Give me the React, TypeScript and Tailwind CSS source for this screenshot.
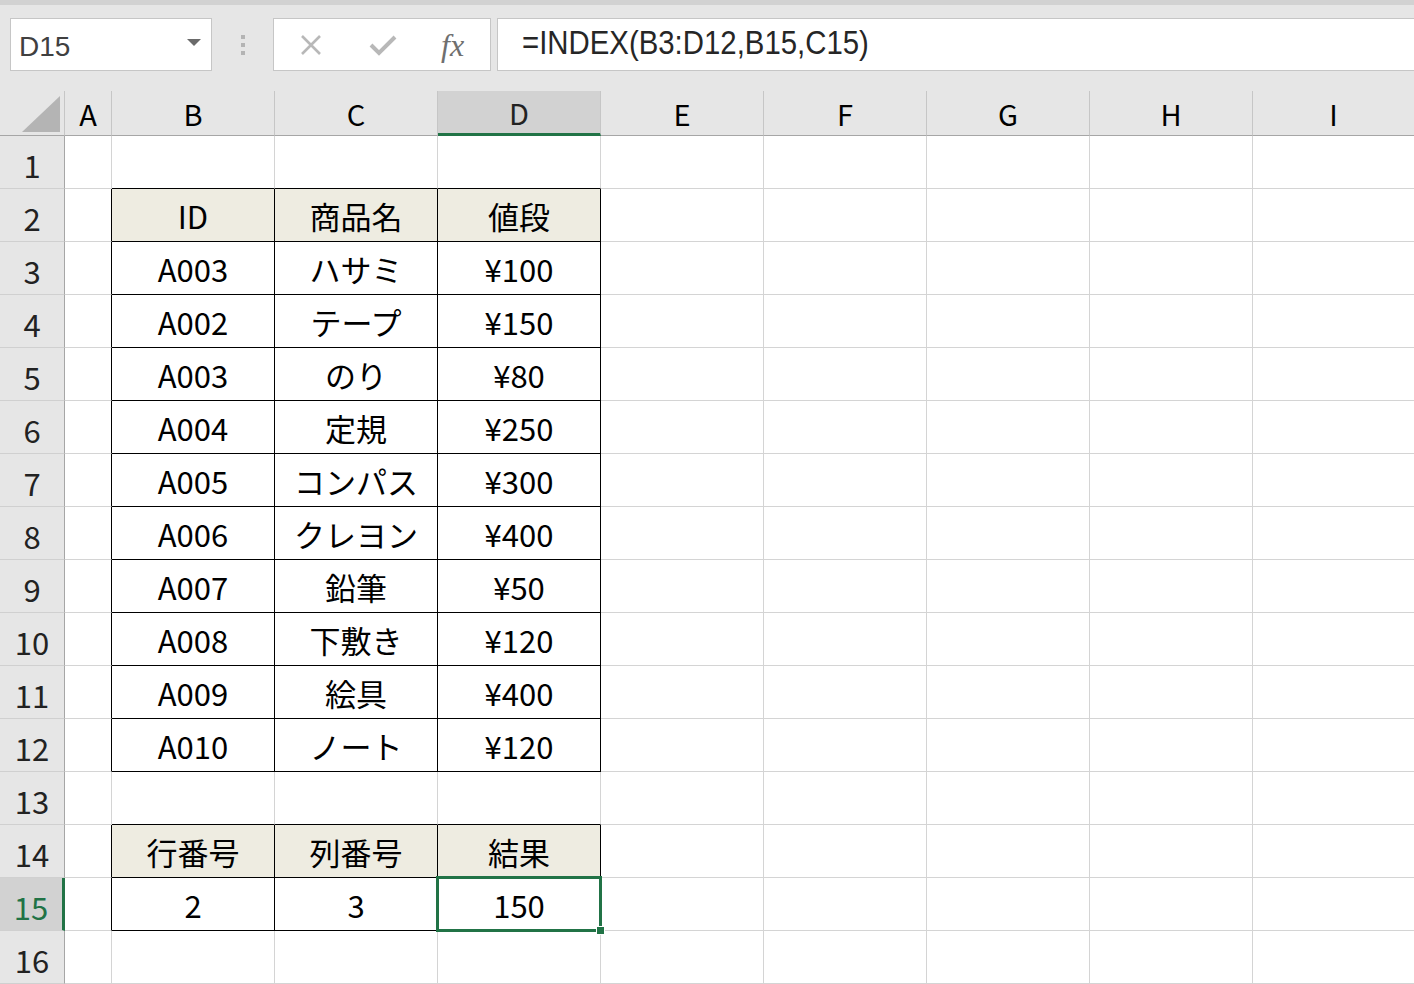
import React from "react";

const COLS = ["A", "B", "C", "D", "E", "F", "G", "H", "I"];
const WIDTHS = ["w-[47px]", "w-[163px]", "w-[163px]", "w-[163px]", "w-[163px]", "w-[163px]", "w-[163px]", "w-[163px]", "w-[162px]"];

const DATA: Record<number, string[]> = {
  2: ["ID", "商品名", "値段"],
  3: ["A003", "ハサミ", "¥100"],
  4: ["A002", "テープ", "¥150"],
  5: ["A003", "のり", "¥80"],
  6: ["A004", "定規", "¥250"],
  7: ["A005", "コンパス", "¥300"],
  8: ["A006", "クレヨン", "¥400"],
  9: ["A007", "鉛筆", "¥50"],
  10: ["A008", "下敷き", "¥120"],
  11: ["A009", "絵具", "¥400"],
  12: ["A010", "ノート", "¥120"],
  14: ["行番号", "列番号", "結果"],
  15: ["2", "3", "150"],
};

const HEAD_ROWS = [2, 14];
const ROWS = Array.from({ length: 16 }, (_, i) => i + 1);

const isTable = (r: number, c: number) =>
  c >= 1 && c <= 3 && ((r >= 2 && r <= 12) || r === 14 || r === 15);

const font = "font-['Noto_Sans_CJK_JP','Noto_Sans',sans-serif]";

function Cell({ r, c }: { r: number; c: number }) {
  const right = isTable(r, c) || isTable(r, c + 1) ? "border-r-black" : "border-r-[#d4d4d4]";
  const bottom = isTable(r, c) || isTable(r + 1, c) ? "border-b-black" : "border-b-[#d4d4d4]";
  const bg = HEAD_ROWS.includes(r) && c >= 1 && c <= 3 ? "bg-[#eeece1]" : "bg-white";
  const text = c >= 1 && c <= 3 && DATA[r] ? DATA[r][c - 1] : "";
  const selected = r === 15 && c === 3;
  return (
    <div
      className={`relative flex h-[53px] shrink-0 items-center justify-center border-r border-b pt-[1px] text-[31px] leading-none text-black ${WIDTHS[c]} ${right} ${bottom} ${bg}`}
    >
      {text}
      {selected && (
        <div className="absolute -top-[2px] -left-[2px] z-10 h-[56px] w-[166px] border-[3px] border-[#217346]">
          <div className="absolute -right-[6px] -bottom-[6px] h-[9px] w-[9px] border border-white bg-[#217346]" />
        </div>
      )}
    </div>
  );
}

function Toolbar() {
  return (
    <div className="flex h-[91px] items-start border-t-[5px] border-[#d2d2d2] bg-[#e6e6e6] pt-[13px]">
      {/* name box */}
      <div className="ml-[10px] flex h-[53px] w-[202px] items-center justify-between border border-[#c6c6c6] bg-white pt-[5px] pr-[10px] pl-[8px]">
        <span className="font-['Liberation_Sans',sans-serif] text-[28px] leading-none text-[#404040]">D15</span>
        <svg className="-mt-[8px]" width="14" height="8" viewBox="0 0 14 8">
          <path d="M0 0 L14 0 L7 7 Z" fill="#6a6a6a" />
        </svg>
      </div>
      {/* grip */}
      <div className="flex h-[53px] w-[61px] flex-col items-center justify-center gap-[4px]">
        <div className="h-[4px] w-[4px] bg-[#b4b4b4]" />
        <div className="h-[4px] w-[4px] bg-[#b4b4b4]" />
        <div className="h-[4px] w-[4px] bg-[#b4b4b4]" />
      </div>
      {/* cancel / enter / fx */}
      <div className="flex h-[53px] w-[218px] items-center border border-[#c6c6c6] bg-white">
        <svg className="ml-[25px]" width="24" height="24" viewBox="0 0 24 24">
          <path d="M3 3 L21 21 M21 3 L3 21" stroke="#b8b8b8" strokeWidth="2.6" />
        </svg>
        <svg className="ml-[46px]" width="28" height="24" viewBox="0 0 28 24">
          <path d="M2 12 L10 20 L26 4" stroke="#b8b8b8" strokeWidth="4" fill="none" />
        </svg>
        <span className="ml-[44px] font-['Liberation_Serif',serif] text-[32px] leading-none text-[#6f6f6f] italic">
          fx
        </span>
      </div>
      {/* formula */}
      <div className="ml-[6px] flex h-[53px] flex-1 items-center border border-r-0 border-[#c6c6c6] bg-white pl-[24px]">
        <span className="-mt-[4px] inline-block origin-left scale-x-[0.89] font-['Liberation_Sans',sans-serif] text-[33px] leading-none whitespace-nowrap text-[#262626]">
          =INDEX(B3:D12,B15,C15)
        </span>
      </div>
    </div>
  );
}

export default function App() {
  return (
    <div className={`h-[984px] w-[1414px] overflow-hidden bg-white ${font}`}>
      <Toolbar />
      {/* column headers */}
      <div className="flex h-[45px] bg-[#e6e6e6]">
        <div className="relative h-[45px] w-[65px] shrink-0 border-r border-b border-r-[#c6c6c6] border-b-[#a6a6a6]">
          <svg className="absolute right-[4px] bottom-[3px]" width="38" height="36" viewBox="0 0 38 36">
            <path d="M38 0 L38 36 L0 36 Z" fill="#b4b4b4" />
          </svg>
        </div>
        {COLS.map((c, i) => (
          <div
            key={c}
            className={`flex h-[45px] shrink-0 items-center justify-center border-r border-r-[#c6c6c6] pt-[1px] text-[29px] leading-none ${WIDTHS[i]} ${
              c === "D"
                ? "border-b-[3px] border-b-[#217346] bg-[#d2d2d2] text-[#222]"
                : "border-b border-b-[#a6a6a6] text-black"
            }`}
          >
            {c}
          </div>
        ))}
      </div>
      {/* rows */}
      {ROWS.map((r) => (
        <div key={r} className="flex">
          <div
            className={`flex h-[53px] w-[65px] shrink-0 items-center justify-center border-b border-b-[#d0d0d0] pt-[4px] text-[31px] leading-none ${
              r === 15
                ? "border-r-[3px] border-r-[#217346] bg-[#d2d2d2] text-[#217346]"
                : "border-r border-r-[#a6a6a6] bg-[#e6e6e6] text-[#222]"
            }`}
          >
            {r}
          </div>
          {COLS.map((_, c) => (
            <Cell key={c} r={r} c={c} />
          ))}
        </div>
      ))}
    </div>
  );
}
